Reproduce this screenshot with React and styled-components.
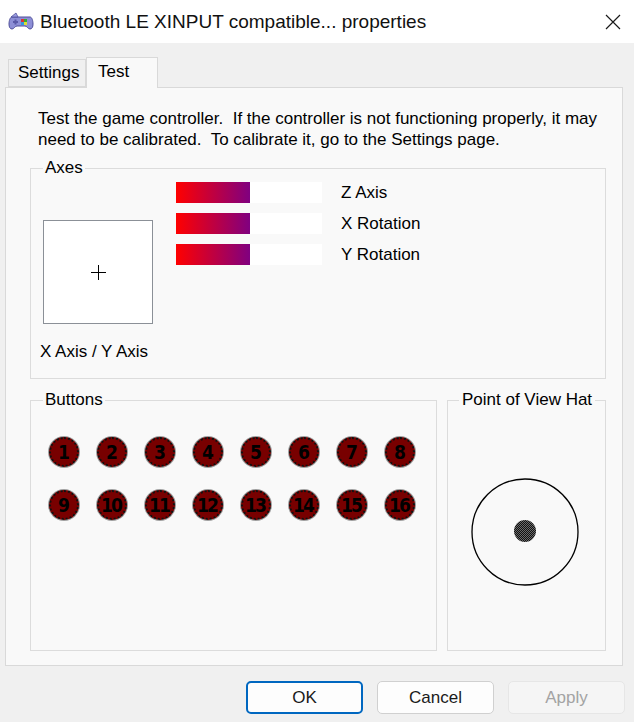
import styled, { createGlobalStyle } from "styled-components";

const GlobalStyle = createGlobalStyle`
  html, body {
    margin: 0;
    padding: 0;
    background: #f0f0f0;
  }
  body {
    font-family: "Liberation Sans", Arial, sans-serif;
    color: #000;
  }
`;

const Window = styled.div`
  width: 634px;
  height: 722px;
  display: flex;
  flex-direction: column;
  background: #f0f0f0;
  overflow: hidden;
`;

const TitleBar = styled.div`
  height: 43px;
  background: #fff;
  display: flex;
  align-items: center;
  padding: 0 12px 0 8px;
  gap: 6px;
  flex-shrink: 0;
`;

const TitleText = styled.span`
  flex: 1;
  font-size: 19px;
  color: #111;
  white-space: nowrap;
`;

const CloseBtn = styled.div`
  width: 18px;
  height: 18px;
  display: flex;
  align-items: center;
  justify-content: center;
`;

const Body = styled.div`
  flex: 1;
  display: flex;
  flex-direction: column;
  padding: 13px 9px 0 5px;
`;

const TabRow = styled.div`
  display: flex;
  align-items: flex-end;
  padding-left: 3px;
  height: 31px;
  position: relative;
  z-index: 1;
`;

const Tab = styled.div`
  height: ${({ $active }) => ($active ? "31px" : "28px")};
  width: ${({ $active }) => ($active ? "72px" : "78px")};
  padding: ${({ $active }) => ($active ? "4px 0 0 11px" : "0 0 0 9px")};
  border: 1px solid #d9d9d9;
  border-bottom: ${({ $active }) => ($active ? "none" : "1px solid #d9d9d9")};
  background: ${({ $active }) => ($active ? "#f9f9f9" : "#f0f0f0")};
  margin-bottom: ${({ $active }) => ($active ? "-1px" : "0")};
  font-size: 17px;
  display: flex;
  align-items: ${({ $active }) => ($active ? "flex-start" : "center")};
  box-sizing: border-box;
`;

const Panel = styled.div`
  width: 618px;
  height: 579px;
  box-sizing: border-box;
  border: 1px solid #d9d9d9;
  background: #f9f9f9;
  padding: 20px 16px 0 24px;
  display: flex;
  flex-direction: column;
`;

const Description = styled.p`
  margin: 0 0 0 8px;
  font-size: 17px;
  line-height: 21px;
  color: #000;
`;

const Group = styled.fieldset`
  margin: 0;
  padding: 0;
  border: 1px solid #dcdcdc;
  box-sizing: border-box;
  min-width: 0;
`;

const Legend = styled.legend`
  margin-left: 12px;
  padding: 0 2px;
  font-size: 17px;
  line-height: 18px;
  color: #000;
`;

const AxesGroup = styled(Group)`
  margin-top: 9px;
  height: 220px;
`;

const AxesContent = styled.div`
  display: flex;
  padding: 5px 0 0 12px;
  gap: 23px;
`;

const XYColumn = styled.div`
  display: flex;
  flex-direction: column;
  align-items: flex-start;
  padding-top: 38px;
`;

const XYBox = styled.div`
  width: 110px;
  height: 104px;
  box-sizing: border-box;
  border: 1px solid #8b9097;
  background: #fff;
  display: flex;
  align-items: center;
  justify-content: center;
`;

const AxisCaption = styled.span`
  margin-top: 18px;
  font-size: 17px;
  margin-left: -3px;
`;

const BarList = styled.div`
  display: flex;
  flex-direction: column;
  gap: 10px;
`;

const BarRow = styled.div`
  display: flex;
  align-items: center;
  gap: 19px;
  height: 21px;
`;

const BarTrack = styled.div`
  width: 146px;
  height: 21px;
  background: #fff;
  display: flex;
`;

const BarFill = styled.div`
  height: 100%;
  background: linear-gradient(to right, #ff0000, #800080);
`;

const BarLabel = styled.span`
  font-size: 17px;
`;

const LowerRow = styled.div`
  display: flex;
  gap: 10px;
  margin-top: 12px;
  height: 260px;
`;

const ButtonsGroup = styled(Group)`
  width: 407px;
`;

const ButtonGrid = styled.div`
  display: grid;
  grid-template-columns: repeat(8, 30px);
  column-gap: 18px;
  row-gap: 23px;
  padding: 28px 0 0 18px;
`;

const JoyButton = styled.div`
  width: 30px;
  height: 30px;
  box-sizing: border-box;
  border-radius: 50%;
  background: #780000;
  border: 2px dotted #111;
  box-shadow: 0 0 0 1px #a0a0a0;
  display: flex;
  align-items: center;
  justify-content: center;
  font-family: "DejaVu Sans Condensed", "Liberation Sans Narrow", sans-serif;
  font-weight: 700;
  font-size: 19px;
  color: #000;
  letter-spacing: ${({ $wide }) => ($wide ? "-2px" : "0")};
  text-indent: ${({ $wide }) => ($wide ? "-2px" : "0")};
`;

const PovGroup = styled(Group)`
  width: 159px;
`;

const PovContent = styled.div`
  display: flex;
  justify-content: center;
  padding: 69px 3px 0 0;
`;

const PovLegend = styled(Legend)`
  margin-left: 11px;
  padding: 0 3px;
`;

const Footer = styled.div`
  flex: 1;
  display: flex;
  justify-content: flex-end;
  align-items: flex-start;
  padding-top: 15px;
  gap: 14px;
`;

const DialogButton = styled.button`
  width: 117px;
  height: 33px;
  box-sizing: border-box;
  border-radius: 5px;
  font-family: "Liberation Sans", Arial, sans-serif;
  font-size: 17px;
  color: ${({ $disabled }) => ($disabled ? "#a3a3a3" : "#1a1a1a")};
  background: ${({ $disabled }) => ($disabled ? "#f5f5f5" : "#fdfdfd")};
  border: ${({ $primary, $disabled }) =>
    $primary
      ? "2px solid #0067c0"
      : $disabled
      ? "1px solid #e6e6e6"
      : "1px solid #d0d0d0"};
  padding: 0;
`;

const GamepadIcon = () => (
  <svg width="26" height="20" viewBox="0 0 26 20">
    <path
      d="M4 5 C2 5 1 9 1 12 C1 15 2 17 4 17 C6 17 7 14 9 14 L17 14 C19 14 20 17 22 17 C24 17 25 15 25 12 C25 9 24 5 22 5 Z"
      fill="#8d8fd6"
      stroke="#4f4f9a"
      strokeWidth="1"
    />
    <path d="M3 5 L8 1 L10 5 Z" fill="#9a9ce0" stroke="#4f4f9a" strokeWidth="0.8" />
    <rect x="13" y="7" width="3" height="3" fill="#d33" />
    <rect x="16" y="7" width="3" height="3" fill="#3a3" />
    <rect x="16" y="10" width="3" height="3" fill="#dd3" />
    <rect x="13" y="10" width="3" height="3" fill="#39d" />
    <rect x="5" y="9" width="5" height="2" fill="#5a5aa8" />
    <rect x="6.5" y="7.5" width="2" height="5" fill="#5a5aa8" />
  </svg>
);

const CloseIcon = () => (
  <svg width="16" height="16" viewBox="0 0 16 16">
    <path d="M1 1 L15 15 M15 1 L1 15" stroke="#1a1a1a" strokeWidth="1.2" />
  </svg>
);

const Crosshair = () => (
  <svg width="15" height="15" viewBox="0 0 15 15">
    <path d="M7.5 0 V15 M0 7.5 H15" stroke="#000" strokeWidth="1" />
  </svg>
);

const PovHat = () => (
  <svg width="109" height="109" viewBox="0 0 109 109">
    <defs>
      <pattern id="dither" width="2" height="2" patternUnits="userSpaceOnUse">
        <rect width="2" height="2" fill="#6a6a6a" />
        <rect width="1" height="1" fill="#111" />
        <rect x="1" y="1" width="1" height="1" fill="#111" />
      </pattern>
    </defs>
    <circle cx="54" cy="54" r="53" fill="none" stroke="#000" strokeWidth="1.3" />
    <circle cx="54" cy="53" r="11" fill="url(#dither)" />
  </svg>
);

const axes = [
  { name: "Z Axis", value: 51 },
  { name: "X Rotation", value: 51 },
  { name: "Y Rotation", value: 51 },
];

const buttons = Array.from({ length: 16 }, (_, i) => i + 1);

export default function App() {
  return (
    <>
      <GlobalStyle />
      <Window>
        <TitleBar>
          <GamepadIcon />
          <TitleText>Bluetooth LE XINPUT compatible... properties</TitleText>
          <CloseBtn>
            <CloseIcon />
          </CloseBtn>
        </TitleBar>
        <Body>
          <TabRow>
            <Tab>Settings</Tab>
            <Tab $active>Test</Tab>
          </TabRow>
          <Panel>
            <Description>
              Test the game controller.&nbsp; If the controller is not functioning properly, it may
              need to be calibrated.&nbsp; To calibrate it, go to the Settings page.
            </Description>
            <AxesGroup>
              <Legend>Axes</Legend>
              <AxesContent>
                <XYColumn>
                  <XYBox>
                    <Crosshair />
                  </XYBox>
                  <AxisCaption>X Axis / Y Axis</AxisCaption>
                </XYColumn>
                <BarList>
                  {axes.map((a) => (
                    <BarRow key={a.name}>
                      <BarTrack>
                        <BarFill style={{ width: `${a.value}%` }} />
                      </BarTrack>
                      <BarLabel>{a.name}</BarLabel>
                    </BarRow>
                  ))}
                </BarList>
              </AxesContent>
            </AxesGroup>
            <LowerRow>
              <ButtonsGroup>
                <Legend>Buttons</Legend>
                <ButtonGrid>
                  {buttons.map((n) => (
                    <JoyButton key={n} $wide={n > 9}>
                      {n}
                    </JoyButton>
                  ))}
                </ButtonGrid>
              </ButtonsGroup>
              <PovGroup>
                <PovLegend>Point of View Hat</PovLegend>
                <PovContent>
                  <PovHat />
                </PovContent>
              </PovGroup>
            </LowerRow>
          </Panel>
          <Footer>
            <DialogButton $primary>OK</DialogButton>
            <DialogButton>Cancel</DialogButton>
            <DialogButton $disabled>Apply</DialogButton>
          </Footer>
        </Body>
      </Window>
    </>
  );
}
